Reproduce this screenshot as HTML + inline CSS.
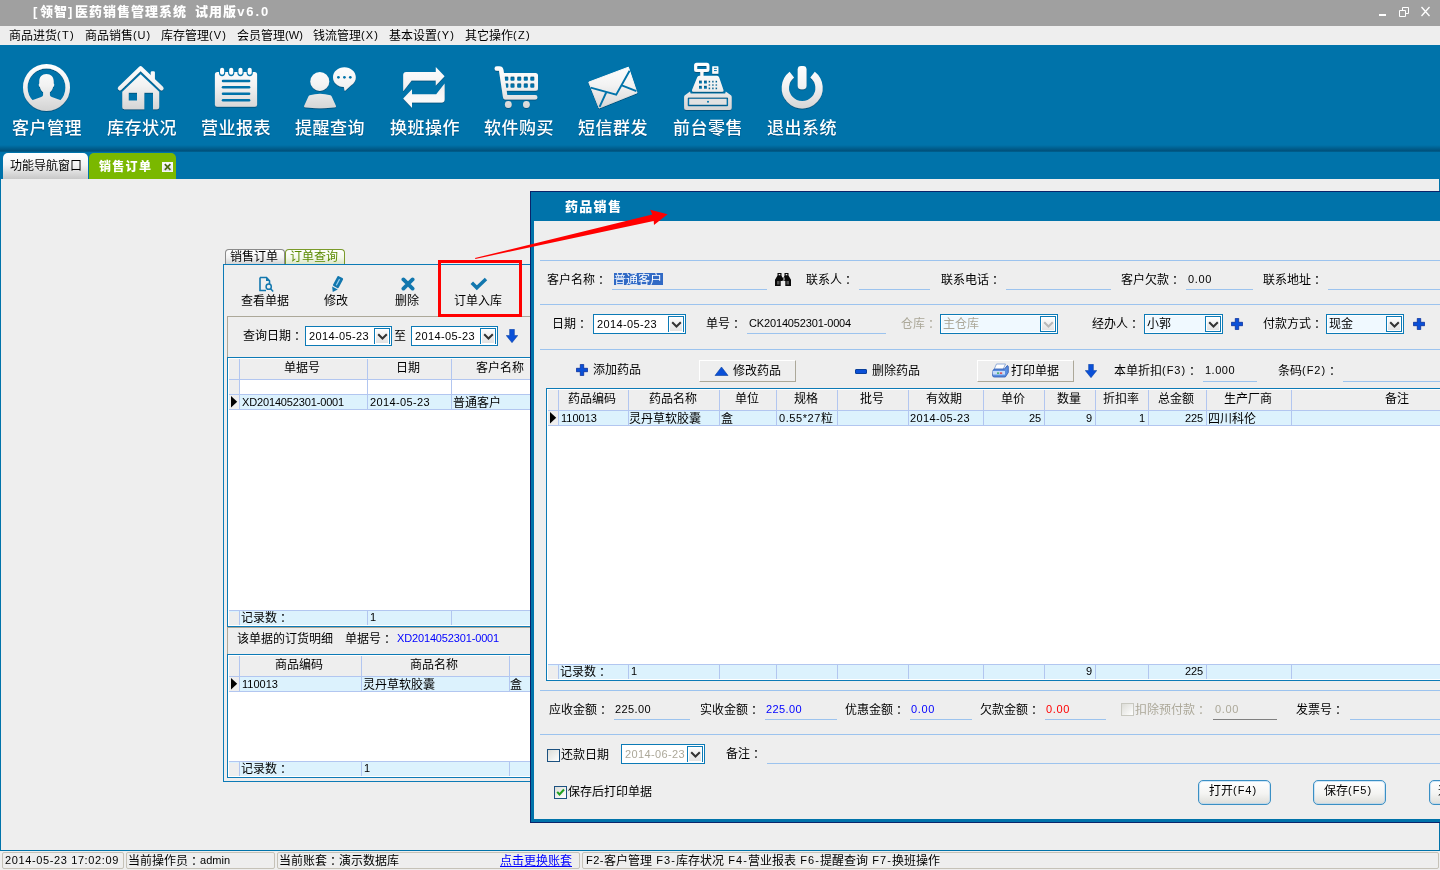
<!DOCTYPE html>
<html lang="zh-CN"><head><meta charset="utf-8"><title>医药销售管理系统</title>
<style>
html,body{margin:0;padding:0;}
body{width:1440px;height:870px;overflow:hidden;background:#eeeeee;position:relative;font:12px/12px "Liberation Sans","Noto Sans CJK SC",sans-serif;color:#000;}
div,span.t,span.b,span.tb,svg{position:absolute;}
div{box-sizing:border-box;}
.t{white-space:pre;font:12px/12px "Liberation Sans","Noto Sans CJK SC",sans-serif;}
.n{font-size:11px;position:relative;top:-1px;}
.b{white-space:pre;font:900 13px/13px "Liberation Sans","Noto Sans CJK SC",sans-serif;letter-spacing:1px;color:#fff;}
.tb{white-space:pre;font:500 17px/17px "Liberation Sans","Noto Sans CJK SC",sans-serif;letter-spacing:0.5px;color:#fff;text-shadow:0 1px 1px rgba(0,50,90,.5);}
.hl{position:absolute;height:1px;background:#9cc3ee;}
.cb{border:1px solid #1b7db5;background:#f4faff;}
.cbd{border:1px solid #1b7db5;background:#f4faff;}
.c{position:relative;left:3px;}

</style></head>
<body>
<div id="app" style="left:0;top:0;width:1440px;height:870px;will-change:transform;overflow:hidden">
<div style="left:0px;top:0px;width:1440px;height:26px;background:#a0a0a0;"></div>
<span class="b" style="left:33px;top:5px"><span style="letter-spacing:2.7px">[</span>领智<span style="letter-spacing:2.7px">]</span>医药销售管理系统<span style="letter-spacing:4.4px"> </span>试用版<span style="letter-spacing:1.9px">v6.0</span></span>
<svg style="left:1375px;top:3px" width="60" height="18" viewBox="0 0 60 18"><rect x="4" y="11" width="7" height="2" fill="#fff"/><path d="M24.5 7.5h6v6h-6z M27.5 7.5v-3h6v6h-3" fill="none" stroke="#fff" stroke-width="1"/><path d="M46.5 4l8 9M54.5 4l-8 9" stroke="#fff" stroke-width="1.3" fill="none"/></svg>
<div style="left:0px;top:26px;width:1440px;height:19px;background:#eeeeee;"></div>
<span class="t" style="left:9px;top:30px;">商品进货<span class="n" style="letter-spacing:1.32px">(T)</span></span>
<span class="t" style="left:85px;top:30px;">商品销售<span class="n" style="letter-spacing:0.91px">(U)</span></span>
<span class="t" style="left:161px;top:30px;">库存管理<span class="n" style="letter-spacing:1.11px">(V)</span></span>
<span class="t" style="left:237px;top:30px;">会员管理<span class="n" style="letter-spacing:0.10px">(W)</span></span>
<span class="t" style="left:313px;top:30px;">钱流管理<span class="n" style="letter-spacing:1.11px">(X)</span></span>
<span class="t" style="left:389px;top:30px;">基本设置<span class="n" style="letter-spacing:1.11px">(Y)</span></span>
<span class="t" style="left:465px;top:30px;">其它操作<span class="n" style="letter-spacing:1.32px">(Z)</span></span>
<div style="left:0px;top:45px;width:1440px;height:134px;background:#0073aa;"></div>
<div style="left:0px;top:145px;width:1440px;height:7px;background:linear-gradient(#0073aa,#00527d 80%,#00608f)"></div>
<span class="tb" style="left:12px;top:120px;">客户管理</span>
<span class="tb" style="left:107px;top:120px;">库存状况</span>
<span class="tb" style="left:201px;top:120px;">营业报表</span>
<span class="tb" style="left:295px;top:120px;">提醒查询</span>
<span class="tb" style="left:390px;top:120px;">换班操作</span>
<span class="tb" style="left:484px;top:120px;">软件购买</span>
<span class="tb" style="left:578px;top:120px;">短信群发</span>
<span class="tb" style="left:673px;top:120px;">前台零售</span>
<span class="tb" style="left:767px;top:120px;">退出系统</span>
<svg style="left:0;top:45px" width="860" height="105" viewBox="0 45 860 105"><defs><linearGradient id="ig" gradientUnits="userSpaceOnUse" x1="0" y1="64" x2="0" y2="110"><stop offset="0" stop-color="#ffffff"/><stop offset="0.45" stop-color="#f3f3f3"/><stop offset="1" stop-color="#d4d4d4"/></linearGradient><filter id="sh" x="-10%" y="-10%" width="120%" height="130%"><feDropShadow dx="0" dy="1" stdDeviation="0.7" flood-color="#003a5c" flood-opacity="0.55"/></filter><clipPath id="uc"><circle cx="46.5" cy="87.4" r="20.2"/></clipPath></defs><g fill="url(#ig)" filter="url(#sh)"><circle cx="46.5" cy="87.4" r="21.2" fill="none" stroke="url(#ig)" stroke-width="4.6"/><g clip-path="url(#uc)"><path d="M46.4 74.1c4.6 0 7.3 3 7.3 7.200v2.200c0.700 0.300 0.800 1.700 0 2.900l-0.600 0.600c-0.500 2.300-1.600 3.900-3.200 5.200v2.600c0 1.300 0.800 1.900 2.600 2.500l7.700 2.600c3 1 5.800 2.600 7.800 5v8h-43v-8c2-2.400 4.800-4 7.800-5l7.700-2.600c1.800-0.600 2.600-1.200 2.600-2.500v-2.600c-1.600-1.300-2.700-2.900-3.200-5.200l-0.600-0.600c-0.800-1.200-0.700-2.600 0-2.900v-2.200c0-4.200 2.700-7.200 7.100-7.200z"/></g><path d="M119.9 88.2L140.6 68.300L161.500 88.200" fill="none" stroke="url(#ig)" stroke-width="4.200" stroke-linecap="round" stroke-linejoin="round"/><path d="M150.700 79.500v-7q0-1.300 1.300-1.300h1.600q1.300 0 1.300 1.300v11z"/><path fill-rule="evenodd" d="M122.300 91.700L140.600 74.200L159.200 91.700V107.300q0 2-2 2H124.300q-2 0-2-2z M128.700 92.800v7.700h8.300v-7.700z M144.300 92.800V109.300h8.700V92.800z"/><rect x="214.900" y="72.100" width="42.200" height="34.700" rx="2.500"/><rect x="219.0" y="67" width="6.200" height="9.200" rx="3.100" fill="#0073aa" filter="none"/><rect x="228.1" y="67" width="6.200" height="9.200" rx="3.100" fill="#0073aa" filter="none"/><rect x="237.4" y="67" width="6.200" height="9.200" rx="3.100" fill="#0073aa" filter="none"/><rect x="246.6" y="67" width="6.200" height="9.200" rx="3.100" fill="#0073aa" filter="none"/><rect x="220.05" y="67.800" width="4.100" height="7" rx="2.050" fill="#ffffff"/><rect x="229.15" y="67.800" width="4.100" height="7" rx="2.050" fill="#ffffff"/><rect x="238.45" y="67.800" width="4.100" height="7" rx="2.050" fill="#ffffff"/><rect x="247.65" y="67.800" width="4.100" height="7" rx="2.050" fill="#ffffff"/><path d="M223 80.9H249.100" stroke="#0073aa" stroke-width="2.500" stroke-linecap="round" fill="none" filter="none"/><path d="M223 87.3H249.100" stroke="#0073aa" stroke-width="2.500" stroke-linecap="round" fill="none" filter="none"/><path d="M223 93.8H249.100" stroke="#0073aa" stroke-width="2.500" stroke-linecap="round" fill="none" filter="none"/><path d="M223 100.2H249.100" stroke="#0073aa" stroke-width="2.500" stroke-linecap="round" fill="none" filter="none"/><circle cx="319.800" cy="81.400" r="9.500"/><path d="M309.700 95.200Q320 92.200 330.400 95.200Q331.300 95.500 331.700 96.400L336 106Q336.400 107 335.300 107.200Q320 109.400 304.800 107.200Q303.700 107 304.100 106L308.400 96.400Q308.800 95.500 309.700 95.200z"/><path d="M344.400 67.300c6.300 0 11.400 4.400 11.400 9.900c0 3.300-1.800 6.200-4.700 8l-5.700 5.200q-0.800 0.600-1-0.400l-0.500-3c-6.100-0.200-10.900-4.500-10.900-9.800c0-5.500 5.100-9.900 11.400-9.900z"/><circle cx="338.4" cy="77.300" r="1.350" fill="#0073aa" filter="none"/><circle cx="344.4" cy="77.300" r="1.350" fill="#0073aa" filter="none"/><circle cx="350.3" cy="77.300" r="1.350" fill="#0073aa" filter="none"/><path d="M406.200 72.100H435.800V66.900L444.600 76.200L435.800 85.500V80.400H411.600L403.200 91.200V75.100q0-3 3-3z"/><path d="M406.200 72.100H435.800V66.900L444.600 76.200L435.800 85.500V80.400H411.600L403.200 91.200V75.100q0-3 3-3z" transform="rotate(180 423.900 87.350)"/><path d="M496.800 68.500H499.300Q500.900 68.500 501.200 70.100L505.300 97.200H535.200" fill="none" stroke="url(#ig)" stroke-width="4.600" stroke-linecap="round" stroke-linejoin="round"/><path fill-rule="evenodd" d="M502.300 73.100H535.500Q538 73.100 538 75.600V88.200Q538 90.700 535.500 90.700H505.300z M504.2 77.4q0-1 1-1h2.200q1 0 1 1v2.400q0 1-1 1h-2.200q-1 0-1-1z M504.2 84.3q0-1 1-1h2.200q1 0 1 1v2.400q0 1-1 1h-2.200q-1 0-1-1z M510.4 77.4q0-1 1-1h2.200q1 0 1 1v2.400q0 1-1 1h-2.200q-1 0-1-1z M510.4 84.3q0-1 1-1h2.200q1 0 1 1v2.400q0 1-1 1h-2.200q-1 0-1-1z M517.1 77.4q0-1 1-1h2.200q1 0 1 1v2.400q0 1-1 1h-2.200q-1 0-1-1z M517.1 84.3q0-1 1-1h2.200q1 0 1 1v2.400q0 1-1 1h-2.200q-1 0-1-1z M523.7 77.4q0-1 1-1h2.200q1 0 1 1v2.400q0 1-1 1h-2.200q-1 0-1-1z M523.7 84.3q0-1 1-1h2.200q1 0 1 1v2.400q0 1-1 1h-2.200q-1 0-1-1z M530.2 77.4q0-1 1-1h2.200q1 0 1 1v2.400q0 1-1 1h-2.200q-1 0-1-1z M530.2 84.3q0-1 1-1h2.200q1 0 1 1v2.400q0 1-1 1h-2.200q-1 0-1-1z "/><circle cx="508.300" cy="104.500" r="3.400"/><circle cx="526.400" cy="104.500" r="3.400"/><path d="M588.800 82.100L628.400 67.200L637 92.800L599.100 108z" stroke="url(#ig)" stroke-width="1" stroke-linejoin="round"/><path d="M590.600 87.600L616.200 94.600L629.600 70.800 M599.600 106.800L606.400 92 M621.800 85.300L636.400 91.200" fill="none" stroke="#0073aa" stroke-width="1.900" filter="none"/><path fill-rule="evenodd" d="M696.600 62.800H706.900Q709.400 62.800 709.400 65.300V69.600Q709.400 72.100 706.900 72.100H696.600Q694.100 72.100 694.100 69.600V65.300Q694.100 62.800 696.600 62.800z M697.200 65.900v3.100h9.400v-3.100z"/><rect x="700.300" y="71.500" width="3.200" height="5"/><rect x="712.200" y="66.200" width="6.200" height="7.600" rx="0.500"/><path d="M714 68.300h2.800M714 70.600h2.800" stroke="#0073aa" stroke-width="1" fill="none" filter="none"/><path fill-rule="evenodd" d="M699.200 75.700H717.100Q718.600 75.700 719.100 77.200L723.500 90Q724 91.700 722.300 91.700H693.200Q691.500 91.700 692 90L697.200 77.200Q697.700 75.700 699.200 75.700z M699.0 80.6h2.900v2.900h-2.900z M699.0 85.8h2.900v2.900h-2.900z M704.0 80.6h2.900v2.900h-2.900z M704.0 85.8h2.900v2.900h-2.900z M708.6 80.8h1.600v1.600h-1.600z M708.6 84.2h1.600v1.600h-1.600z M708.6 87.6h1.600v1.600h-1.600z M712.1 80.8h1.600v1.600h-1.600z M712.1 84.2h1.600v1.600h-1.600z M712.1 87.6h1.600v1.600h-1.600z M715.5 80.8h1.600v1.600h-1.600z M715.5 84.2h1.600v1.600h-1.600z M715.5 87.6h1.600v1.600h-1.600z "/><path fill-rule="evenodd" d="M690 91.400L684.600 95.600Q684.100 96.200 684.100 97.200V107.400Q684.100 109.900 686.600 109.900H729.200Q731.700 109.900 731.700 107.400V97.200Q731.700 96.200 731.200 95.600L725.800 91.400L725.200 93.600H690.600z M688.700 97.400Q687.700 97.400 687.700 98.400V105.200Q687.700 106.200 688.700 106.200H727.100Q728.100 106.200 728.100 105.200V98.400Q728.100 97.400 727.100 97.400z"/><rect x="689.200" y="98.900" width="37.400" height="5.800" fill="#e2e2e2" filter="none"/><circle cx="708" cy="101.800" r="1" fill="#0073aa" filter="none"/><path d="M812.57 74.62A16.85 16.85 0 1 1 791.83 74.62" fill="none" stroke="url(#ig)" stroke-width="7.300"/><rect x="797.700" y="65.900" width="8.800" height="23.300" rx="3.400"/></g></svg>
<div style="left:3px;top:153px;width:85px;height:26px;border-radius:5px 5px 0 0;background:linear-gradient(#ffffff,#f4f4f4 45%,#c8c8c8)"></div>
<span class="t" style="left:10px;top:160px;">功能导航窗口</span>
<div style="left:89px;top:153px;width:87px;height:26px;background:#7ab800;border-radius:5px 5px 0 0;"></div>
<span class="b" style="left:99px;top:161px;font-size:12px;line-height:12px;letter-spacing:1.3px;">销售订单</span>
<svg style="left:162px;top:162px" width="11" height="10" viewBox="0 0 11 10"><defs><linearGradient id="cg" x1="0" y1="0" x2="0" y2="1"><stop offset="0" stop-color="#ffffff"/><stop offset="1" stop-color="#dcdce6"/></linearGradient></defs><rect x="0" y="0" width="11" height="10" fill="url(#cg)"/><rect x="0.500" y="0.500" width="10" height="9" fill="none" stroke="#f6f6f6"/><path d="M2.800 2.200l5.600 5.600M8.400 2.200l-5.600 5.600" stroke="#4c6a12" stroke-width="1.700" fill="none"/></svg>
<div style="left:0px;top:179px;width:1440px;height:672px;background:#eeeeee;border-left:1px solid #0073aa;border-right:1px solid #0073aa;border-bottom:1px solid #0073aa;"></div>
<div style="left:225px;top:249px;width:60px;height:16px;border:1px solid #8a8a8a;border-bottom:none;border-radius:4px 4px 0 0;background:linear-gradient(#ffffff,#f2f2f2 50%,#d0d0d0)"></div>
<span class="t" style="left:230px;top:251px;">销售订单</span>
<div style="left:285px;top:249px;width:60px;height:16px;border:1px solid #7a9a2a;border-bottom:none;border-radius:4px 4px 0 0;background:linear-gradient(#ffffff,#f4f8ec 50%,#d8e4c0)"></div>
<span class="t" style="left:290px;top:251px;color:#5a8a00;">订单查询</span>
<div style="left:223px;top:264px;width:320px;height:518px;border:1px solid #0c7ab6;"></div>
<span class="t" style="left:241px;top:295px;">查看单据</span>
<span class="t" style="left:324px;top:295px;">修改</span>
<span class="t" style="left:395px;top:295px;">删除</span>
<span class="t" style="left:454px;top:295px;">订单入库</span>
<svg style="left:258px;top:276px" width="17" height="17" viewBox="0 0 17 17"><path d="M2 1.5h6.5l3 3.2V8M2 1.5v13h6" fill="none" stroke="#1277ae" stroke-width="1.6"/><path d="M8 1.5v3.5h3.5" fill="#1277ae"/><circle cx="10.7" cy="10.7" r="2.6" fill="none" stroke="#1277ae" stroke-width="1.5"/><path d="M12.6 12.8l2.6 2.7" stroke="#1277ae" stroke-width="1.6"/></svg>
<svg style="left:330px;top:276px" width="14" height="17" viewBox="0 0 14 17"><g transform="rotate(28 7 8)"><rect x="3.800" y="0.200" width="6.400" height="11.200" rx="1.200" fill="#1277ae"/><path d="M3.800 12.400h6.400L7 17z" fill="#1277ae"/><rect x="6.400" y="2.500" width="1.200" height="7" fill="#9ad0ee"/></g></svg>
<svg style="left:401px;top:277px" width="14" height="14" viewBox="0 0 14 14"><path d="M2.400 2.400l9.200 9.200M11.600 2.400l-9.200 9.200" stroke="#1277ae" stroke-width="3.800" stroke-linecap="round" fill="none"/></svg>
<svg style="left:470px;top:277px" width="18" height="14" viewBox="0 0 18 14"><path d="M1.800 5.800l5 5L16 2" stroke="#1277ae" stroke-width="3.500" fill="none"/></svg>
<div style="left:227px;top:316px;width:316px;height:41px;border-top:1px solid #aca899;border-left:1px solid #aca899;"></div>
<span class="t" style="left:243px;top:330px;">查询日期<span class="c">：</span></span>
<div style="left:305px;top:326px;width:87px;height:20px;background:#ffffff;border:1px solid #0c7ab6;"></div>
<span class="t" style="left:309px;top:331px;color:#000;"><span class="n" style="letter-spacing:0.37px">2014-05-23</span></span>
<div style="left:374px;top:328px;width:16px;height:16px;border:1px solid #0c7ab6;border-bottom:none;background:#fff;"></div>
<div style="left:376px;top:330px;width:12px;height:13px;background:linear-gradient(#fbfbfb,#e2e2e2);"></div>
<svg style="left:377px;top:333px" width="11" height="8" viewBox="0 0 11 8"><path d="M1.2 1.2l4.300 4.300L9.800 1.200" stroke="#333" stroke-width="2" fill="none"/></svg>
<span class="t" style="left:394px;top:330px;">至</span>
<div style="left:411px;top:326px;width:87px;height:20px;background:#ffffff;border:1px solid #0c7ab6;"></div>
<span class="t" style="left:415px;top:331px;color:#000;"><span class="n" style="letter-spacing:0.37px">2014-05-23</span></span>
<div style="left:480px;top:328px;width:16px;height:16px;border:1px solid #0c7ab6;border-bottom:none;background:#fff;"></div>
<div style="left:482px;top:330px;width:12px;height:13px;background:linear-gradient(#fbfbfb,#e2e2e2);"></div>
<svg style="left:483px;top:333px" width="11" height="8" viewBox="0 0 11 8"><path d="M1.2 1.2l4.300 4.300L9.800 1.200" stroke="#333" stroke-width="2" fill="none"/></svg>
<svg style="left:506px;top:329px" width="12" height="14" viewBox="0 0 12 14"><path d="M3.6 0.3h4.8v6.2h3.4L6 13.7 0.2 6.5h3.4z" fill="#0a50d8" stroke="#0a3f9a" stroke-width="0.5"/></svg>
<div style="left:227px;top:357px;width:316px;height:270px;background:#ffffff;border:1px solid #0c7ab6;"></div>
<div style="left:229px;top:359px;width:313px;height:20px;background:#eeeeee;"></div>
<div style="left:229px;top:379px;width:313px;height:1px;background:#b2c6f0;"></div>
<div style="left:229px;top:380px;width:10px;height:14px;background:#eeeeee;"></div>
<div style="left:229px;top:394px;width:313px;height:1px;background:#b2c6f0;"></div>
<div style="left:229px;top:395px;width:313px;height:14px;background:#dcf2fd;"></div>
<div style="left:229px;top:395px;width:10px;height:14px;background:#eeeeee;"></div>
<div style="left:229px;top:409px;width:313px;height:1px;background:#b2c6f0;"></div>
<svg style="left:231px;top:396px" width="7" height="12" viewBox="0 0 7 12"><path d="M0 0l6.200 5.700L0 11.400z" fill="#000"/></svg>
<span class="t" style="left:242px;top:397px;"><span class="n" style="letter-spacing:-0.15px">XD2014052301-0001</span></span>
<span class="t" style="left:370px;top:397px;"><span class="n" style="letter-spacing:0.37px">2014-05-23</span></span>
<span class="t" style="left:453px;top:397px;">普通客户</span>
<div style="left:229px;top:610px;width:313px;height:1px;background:#b2c6f0;"></div>
<div style="left:229px;top:611px;width:313px;height:14px;background:#dcf2fd;"></div>
<div style="left:229px;top:612px;width:10px;height:13px;background:#eeeeee;"></div>
<span class="t" style="left:241px;top:612px;">记录数<span class="c">：</span></span>
<span class="t" style="left:370px;top:612px;"><span class="n" style="letter-spacing:-0.12px">1</span></span>
<div style="left:239px;top:359px;width:1px;height:51px;background:#b2c6f0;"></div>
<div style="left:239px;top:611px;width:1px;height:14px;background:#b2c6f0;"></div>
<div style="left:367px;top:359px;width:1px;height:51px;background:#b2c6f0;"></div>
<div style="left:367px;top:611px;width:1px;height:14px;background:#b2c6f0;"></div>
<div style="left:451px;top:359px;width:1px;height:51px;background:#b2c6f0;"></div>
<div style="left:451px;top:611px;width:1px;height:14px;background:#b2c6f0;"></div>
<span class="t" style="left:284px;top:362px;">单据号</span>
<span class="t" style="left:396px;top:362px;">日期</span>
<span class="t" style="left:476px;top:362px;">客户名称</span>
<div style="left:227px;top:627px;width:316px;height:27px;border-top:1px solid #aca899;border-left:1px solid #aca899;"></div>
<span class="t" style="left:237px;top:633px;">该单据的订货明细</span>
<span class="t" style="left:345px;top:633px;">单据号<span class="c">：</span></span>
<span class="t" style="left:397px;top:633px;color:#0000ff;"><span class="n" style="letter-spacing:-0.15px">XD2014052301-0001</span></span>
<div style="left:227px;top:654px;width:316px;height:124px;background:#ffffff;border:1px solid #0c7ab6;"></div>
<div style="left:229px;top:656px;width:313px;height:20px;background:#eeeeee;"></div>
<div style="left:229px;top:676px;width:313px;height:1px;background:#b2c6f0;"></div>
<div style="left:229px;top:677px;width:313px;height:14px;background:#dcf2fd;"></div>
<div style="left:229px;top:677px;width:10px;height:14px;background:#eeeeee;"></div>
<div style="left:229px;top:691px;width:313px;height:1px;background:#b2c6f0;"></div>
<svg style="left:231px;top:678px" width="7" height="12" viewBox="0 0 7 12"><path d="M0 0l6.200 5.700L0 11.400z" fill="#000"/></svg>
<span class="t" style="left:242px;top:679px;"><span class="n" style="letter-spacing:0.02px">110013</span></span>
<span class="t" style="left:363px;top:679px;">灵丹草软胶囊</span>
<span class="t" style="left:510px;top:679px;">盒</span>
<div style="left:229px;top:761px;width:313px;height:1px;background:#b2c6f0;"></div>
<div style="left:229px;top:762px;width:313px;height:14px;background:#dcf2fd;"></div>
<div style="left:229px;top:763px;width:10px;height:13px;background:#eeeeee;"></div>
<span class="t" style="left:241px;top:763px;">记录数<span class="c">：</span></span>
<span class="t" style="left:364px;top:763px;"><span class="n" style="letter-spacing:-0.12px">1</span></span>
<div style="left:239px;top:656px;width:1px;height:36px;background:#b2c6f0;"></div>
<div style="left:239px;top:762px;width:1px;height:14px;background:#b2c6f0;"></div>
<div style="left:361px;top:656px;width:1px;height:36px;background:#b2c6f0;"></div>
<div style="left:361px;top:762px;width:1px;height:14px;background:#b2c6f0;"></div>
<div style="left:509px;top:656px;width:1px;height:36px;background:#b2c6f0;"></div>
<div style="left:509px;top:762px;width:1px;height:14px;background:#b2c6f0;"></div>
<span class="t" style="left:275px;top:659px;">商品编码</span>
<span class="t" style="left:410px;top:659px;">商品名称</span>
<div style="left:530px;top:191px;width:920px;height:632px;background:#eeeeee;border:1px solid #0a246a;"></div>
<div style="left:531px;top:192px;width:920px;height:630px;border:3px solid #0073aa;border-top-width:29px;"></div>
<span class="b" style="left:565px;top:200px;letter-spacing:1.3px;">药品销售</span>
<div style="left:540px;top:260px;width:900px;height:1px;background:#9cc3ee;"></div>
<div style="left:540px;top:304px;width:900px;height:1px;background:#9cc3ee;"></div>
<div style="left:540px;top:349px;width:900px;height:1px;background:#9cc3ee;"></div>
<div style="left:540px;top:690px;width:900px;height:1px;background:#9cc3ee;"></div>
<div style="left:540px;top:734px;width:900px;height:1px;background:#9cc3ee;"></div>
<span class="t" style="left:547px;top:274px;">客户名称<span class="c">：</span></span>
<div style="left:614px;top:273px;width:49px;height:12px;background:#316ac5;"></div>
<span class="t" style="left:614px;top:274px;color:#fff;">普通客户</span>
<div style="left:612px;top:289px;width:155px;height:1px;background:#9cc3ee;"></div>
<svg style="left:775px;top:273px" width="16" height="13" viewBox="0 0 16 13"><path d="M2.500 0h4v2.600l1 2.400v3h-1.800v5h-5.700v-6.200l2.500-4.200z M13.500 0h-4v2.600l-1 2.400v3h1.800v5h5.700v-6.200l-2.500-4.200z M6.500 4.500h3v3h-3z" fill="#0a0a0a"/><path d="M3.700 1h1.600v1.200h-1.600z M10.700 1h1.600v1.200h-1.600z" fill="#eee"/><path d="M2 8h2.500v3.500h-2.500z M11.500 8h2.500v3.500h-2.500z" fill="#555"/></svg>
<span class="t" style="left:806px;top:274px;">联系人<span class="c">：</span></span>
<div style="left:859px;top:289px;width:71px;height:1px;background:#9cc3ee;"></div>
<span class="t" style="left:941px;top:274px;">联系电话<span class="c">：</span></span>
<div style="left:1006px;top:289px;width:105px;height:1px;background:#9cc3ee;"></div>
<span class="t" style="left:1121px;top:274px;">客户欠款<span class="c">：</span></span>
<span class="t" style="left:1188px;top:274px;"><span class="n" style="letter-spacing:0.65px">0.00</span></span>
<div style="left:1186px;top:289px;width:67px;height:1px;background:#9cc3ee;"></div>
<span class="t" style="left:1263px;top:274px;">联系地址<span class="c">：</span></span>
<div style="left:1328px;top:289px;width:112px;height:1px;background:#9cc3ee;"></div>
<span class="t" style="left:552px;top:318px;">日期<span class="c">：</span></span>
<div style="left:593px;top:314px;width:93px;height:20px;background:#ffffff;border:1px solid #0c7ab6;"></div>
<span class="t" style="left:597px;top:319px;color:#000;"><span class="n" style="letter-spacing:0.37px">2014-05-23</span></span>
<div style="left:668px;top:316px;width:16px;height:16px;border:1px solid #0c7ab6;border-bottom:none;background:#fff;"></div>
<div style="left:670px;top:318px;width:12px;height:13px;background:linear-gradient(#fbfbfb,#e2e2e2);"></div>
<svg style="left:671px;top:321px" width="11" height="8" viewBox="0 0 11 8"><path d="M1.2 1.2l4.300 4.300L9.800 1.200" stroke="#333" stroke-width="2" fill="none"/></svg>
<span class="t" style="left:706px;top:318px;">单号<span class="c">：</span></span>
<span class="t" style="left:749px;top:318px;"><span class="n" style="letter-spacing:-0.15px">CK2014052301-0004</span></span>
<div style="left:747px;top:333px;width:139px;height:1px;background:#9cc3ee;"></div>
<span class="t" style="left:901px;top:318px;color:#aca899;">仓库<span class="c">：</span></span>
<div style="left:940px;top:314px;width:118px;height:20px;background:#ffffff;border:1px solid #0c7ab6;"></div>
<div style="left:942px;top:316px;width:98px;height:16px;background:#f0f9ff;"></div>
<span class="t" style="left:943px;top:318px;color:#aca899;">主仓库</span>
<div style="left:1040px;top:316px;width:16px;height:16px;border:1px solid #0c7ab6;background:linear-gradient(#ffffff,#e0e0e0);box-shadow:inset 0 0 0 1px #fff;"></div>
<svg style="left:1043px;top:321px" width="11" height="8" viewBox="0 0 11 8"><path d="M1.2 1.2l4.300 4.300L9.800 1.200" stroke="#b8b8b8" stroke-width="2" fill="none"/></svg>
<span class="t" style="left:1092px;top:318px;">经办人<span class="c">：</span></span>
<div style="left:1144px;top:314px;width:79px;height:20px;background:#ffffff;border:1px solid #0c7ab6;"></div>
<div style="left:1146px;top:316px;width:59px;height:16px;background:#f0f9ff;"></div>
<span class="t" style="left:1147px;top:318px;color:#000;">小郭</span>
<div style="left:1205px;top:316px;width:16px;height:16px;border:1px solid #0c7ab6;background:linear-gradient(#ffffff,#e0e0e0);box-shadow:inset 0 0 0 1px #fff;"></div>
<svg style="left:1208px;top:321px" width="11" height="8" viewBox="0 0 11 8"><path d="M1.2 1.2l4.300 4.300L9.800 1.200" stroke="#333" stroke-width="2" fill="none"/></svg>
<svg style="left:1231px;top:318px" width="12" height="12" viewBox="0 0 12 12"><path d="M4.300 0.400h3.400v3.900h3.900v3.400h-3.900v3.900h-3.400v-3.900h-3.900v-3.400h3.900z" fill="#0a50d8" stroke="#0a2f9a" stroke-width="0.800"/></svg>
<span class="t" style="left:1263px;top:318px;">付款方式<span class="c">：</span></span>
<div style="left:1326px;top:314px;width:78px;height:20px;background:#ffffff;border:1px solid #0c7ab6;"></div>
<div style="left:1328px;top:316px;width:58px;height:16px;background:#f0f9ff;"></div>
<span class="t" style="left:1329px;top:318px;color:#000;">现金</span>
<div style="left:1386px;top:316px;width:16px;height:16px;border:1px solid #0c7ab6;background:linear-gradient(#ffffff,#e0e0e0);box-shadow:inset 0 0 0 1px #fff;"></div>
<svg style="left:1389px;top:321px" width="11" height="8" viewBox="0 0 11 8"><path d="M1.2 1.2l4.300 4.300L9.800 1.200" stroke="#333" stroke-width="2" fill="none"/></svg>
<svg style="left:1413px;top:318px" width="12" height="12" viewBox="0 0 12 12"><path d="M4.300 0.400h3.400v3.900h3.900v3.400h-3.900v3.900h-3.400v-3.900h-3.900v-3.400h3.900z" fill="#0a50d8" stroke="#0a2f9a" stroke-width="0.800"/></svg>
<svg style="left:576px;top:364px" width="12" height="12" viewBox="0 0 12 12"><path d="M4.300 0.400h3.400v3.900h3.900v3.400h-3.900v3.900h-3.400v-3.900h-3.900v-3.400h3.900z" fill="#0a50d8" stroke="#0a2f9a" stroke-width="0.800"/></svg>
<span class="t" style="left:593px;top:364px;">添加药品</span>
<div style="left:699px;top:360px;width:97px;height:22px;background:#eeeeee;border:1px solid;border-color:#ffffff #aca899 #aca899 #ffffff;"></div>
<svg style="left:714px;top:366px" width="15" height="11" viewBox="0 0 15 11"><path d="M7.500 1L14 9.500H1z" fill="#0a50d8" stroke="#0a3f9a" stroke-width="0.6"/></svg>
<span class="t" style="left:733px;top:365px;">修改药品</span>
<div style="left:855px;top:369px;width:12px;height:5px;background:#0a50d8;border:1px solid #0a3f9a;border-radius:1px;"></div>
<span class="t" style="left:872px;top:365px;">删除药品</span>
<div style="left:977px;top:360px;width:97px;height:22px;background:#eeeeee;border:1px solid;border-color:#ffffff #aca899 #aca899 #ffffff;"></div>
<svg style="left:991px;top:363px" width="18" height="16" viewBox="0 0 18 16"><path d="M5.500 1h9l-2.500 5.500h-9z" fill="#ffffff" stroke="#7a9ad0" stroke-width="0.800"/><path d="M2 7.500q0.500-1.500 2-1.500h9.500l2.800-3.500q1 0.300 1 1.500v5.500l-3 4.500h-11q-1.800 0-1.800-1.800z" fill="#5a8ee0" stroke="#2a55b0" stroke-width="0.800"/><path d="M1.800 8h12.200v3.600h-12.200z" fill="#c8dcf8"/><rect x="6" y="9.500" width="2.200" height="1.200" fill="#20a040"/><rect x="9" y="9.500" width="2.200" height="1.200" fill="#e02020"/></svg>
<span class="t" style="left:1011px;top:365px;">打印单据</span>
<svg style="left:1085px;top:364px" width="12" height="14" viewBox="0 0 12 14"><path d="M3.6 0.3h4.8v6.2h3.4L6 13.7 0.2 6.5h3.4z" fill="#0a50d8" stroke="#0a3f9a" stroke-width="0.5"/></svg>
<span class="t" style="left:1114px;top:365px;">本单折扣<span class="n" style="letter-spacing:0.96px">(F3)</span><span class="c">：</span></span>
<span class="t" style="left:1205px;top:365px;"><span class="n" style="letter-spacing:0.50px">1.000</span></span>
<div style="left:1203px;top:381px;width:54px;height:1px;background:#9cc3ee;"></div>
<span class="t" style="left:1278px;top:365px;">条码<span class="n" style="letter-spacing:0.96px">(F2)</span><span class="c">：</span></span>
<div style="left:1343px;top:381px;width:97px;height:1px;background:#9cc3ee;"></div>
<div style="left:546px;top:388px;width:910px;height:293px;background:#ffffff;border:1px solid #0c7ab6;"></div>
<div style="left:548px;top:390px;width:907px;height:20px;background:#eeeeee;"></div>
<div style="left:548px;top:410px;width:907px;height:1px;background:#b2c6f0;"></div>
<div style="left:548px;top:411px;width:907px;height:14px;background:#dcf2fd;"></div>
<div style="left:548px;top:411px;width:10px;height:14px;background:#eeeeee;"></div>
<div style="left:548px;top:425px;width:907px;height:1px;background:#b2c6f0;"></div>
<svg style="left:550px;top:412px" width="7" height="12" viewBox="0 0 7 12"><path d="M0 0l6.200 5.700L0 11.400z" fill="#000"/></svg>
<span class="t" style="left:561px;top:413px;"><span class="n" style="letter-spacing:0.02px">110013</span></span>
<span class="t" style="left:629px;top:413px;">灵丹草软胶囊</span>
<span class="t" style="left:721px;top:413px;">盒</span>
<span class="t" style="left:779px;top:413px;"><span class="n" style="letter-spacing:0.58px">0.55*27</span>粒</span>
<span class="t" style="left:910px;top:413px;"><span class="n" style="letter-spacing:0.37px">2014-05-23</span></span>
<span class="t" style="left:941px;width:100px;text-align:right;top:413px"><span class="n" style="letter-spacing:-0.12px">25</span></span>
<span class="t" style="left:992px;width:100px;text-align:right;top:413px"><span class="n" style="letter-spacing:-0.12px">9</span></span>
<span class="t" style="left:1045px;width:100px;text-align:right;top:413px"><span class="n" style="letter-spacing:-0.12px">1</span></span>
<span class="t" style="left:1103px;width:100px;text-align:right;top:413px"><span class="n" style="letter-spacing:-0.12px">225</span></span>
<span class="t" style="left:1208px;top:413px;">四川科伦</span>
<div style="left:548px;top:664px;width:907px;height:1px;background:#b2c6f0;"></div>
<div style="left:548px;top:665px;width:907px;height:14px;background:#dcf2fd;"></div>
<div style="left:548px;top:666px;width:10px;height:13px;background:#eeeeee;"></div>
<span class="t" style="left:560px;top:666px;">记录数<span class="c">：</span></span>
<span class="t" style="left:631px;top:666px;"><span class="n" style="letter-spacing:-0.12px">1</span></span>
<span class="t" style="left:992px;width:100px;text-align:right;top:666px"><span class="n" style="letter-spacing:-0.12px">9</span></span>
<span class="t" style="left:1103px;width:100px;text-align:right;top:666px"><span class="n" style="letter-spacing:-0.12px">225</span></span>
<div style="left:558px;top:390px;width:1px;height:36px;background:#b2c6f0;"></div>
<div style="left:558px;top:665px;width:1px;height:14px;background:#b2c6f0;"></div>
<div style="left:628px;top:390px;width:1px;height:36px;background:#b2c6f0;"></div>
<div style="left:628px;top:665px;width:1px;height:14px;background:#b2c6f0;"></div>
<div style="left:719px;top:390px;width:1px;height:36px;background:#b2c6f0;"></div>
<div style="left:719px;top:665px;width:1px;height:14px;background:#b2c6f0;"></div>
<div style="left:776px;top:390px;width:1px;height:36px;background:#b2c6f0;"></div>
<div style="left:776px;top:665px;width:1px;height:14px;background:#b2c6f0;"></div>
<div style="left:837px;top:390px;width:1px;height:36px;background:#b2c6f0;"></div>
<div style="left:837px;top:665px;width:1px;height:14px;background:#b2c6f0;"></div>
<div style="left:908px;top:390px;width:1px;height:36px;background:#b2c6f0;"></div>
<div style="left:908px;top:665px;width:1px;height:14px;background:#b2c6f0;"></div>
<div style="left:983px;top:390px;width:1px;height:36px;background:#b2c6f0;"></div>
<div style="left:983px;top:665px;width:1px;height:14px;background:#b2c6f0;"></div>
<div style="left:1044px;top:390px;width:1px;height:36px;background:#b2c6f0;"></div>
<div style="left:1044px;top:665px;width:1px;height:14px;background:#b2c6f0;"></div>
<div style="left:1095px;top:390px;width:1px;height:36px;background:#b2c6f0;"></div>
<div style="left:1095px;top:665px;width:1px;height:14px;background:#b2c6f0;"></div>
<div style="left:1148px;top:390px;width:1px;height:36px;background:#b2c6f0;"></div>
<div style="left:1148px;top:665px;width:1px;height:14px;background:#b2c6f0;"></div>
<div style="left:1206px;top:390px;width:1px;height:36px;background:#b2c6f0;"></div>
<div style="left:1206px;top:665px;width:1px;height:14px;background:#b2c6f0;"></div>
<div style="left:1291px;top:390px;width:1px;height:36px;background:#b2c6f0;"></div>
<div style="left:1291px;top:665px;width:1px;height:14px;background:#b2c6f0;"></div>
<span class="t" style="left:568px;top:393px;">药品编码</span>
<span class="t" style="left:649px;top:393px;">药品名称</span>
<span class="t" style="left:735px;top:393px;">单位</span>
<span class="t" style="left:794px;top:393px;">规格</span>
<span class="t" style="left:860px;top:393px;">批号</span>
<span class="t" style="left:926px;top:393px;">有效期</span>
<span class="t" style="left:1001px;top:393px;">单价</span>
<span class="t" style="left:1057px;top:393px;">数量</span>
<span class="t" style="left:1103px;top:393px;">折扣率</span>
<span class="t" style="left:1158px;top:393px;">总金额</span>
<span class="t" style="left:1224px;top:393px;">生产厂商</span>
<span class="t" style="left:1385px;top:393px;">备注</span>
<span class="t" style="left:549px;top:704px;">应收金额<span class="c">：</span></span>
<span class="t" style="left:615px;top:704px;"><span class="n" style="letter-spacing:0.39px">225.00</span></span>
<div style="left:614px;top:719px;width:76px;height:1px;background:#9cc3ee;"></div>
<span class="t" style="left:700px;top:704px;">实收金额<span class="c">：</span></span>
<span class="t" style="left:766px;top:704px;color:#0000ff;"><span class="n" style="letter-spacing:0.39px">225.00</span></span>
<div style="left:765px;top:719px;width:72px;height:1px;background:#9cc3ee;"></div>
<span class="t" style="left:845px;top:704px;">优惠金额<span class="c">：</span></span>
<span class="t" style="left:911px;top:704px;color:#0000ff;"><span class="n" style="letter-spacing:0.65px">0.00</span></span>
<div style="left:910px;top:719px;width:62px;height:1px;background:#9cc3ee;"></div>
<span class="t" style="left:980px;top:704px;">欠款金额<span class="c">：</span></span>
<span class="t" style="left:1046px;top:704px;color:#ff0000;"><span class="n" style="letter-spacing:0.65px">0.00</span></span>
<div style="left:1045px;top:719px;width:61px;height:1px;background:#9cc3ee;"></div>
<div style="left:1121px;top:703px;width:13px;height:13px;border:1px solid #c8c8c0;background:linear-gradient(135deg,#dcdcd7,#ffffff);"></div>
<span class="t" style="left:1135px;top:704px;color:#aca899;">扣除预付款<span class="c">：</span></span>
<span class="t" style="left:1215px;top:704px;color:#aca899;"><span class="n" style="letter-spacing:0.65px">0.00</span></span>
<div style="left:1213px;top:719px;width:64px;height:1px;background:#808080;"></div>
<span class="t" style="left:1296px;top:704px;">发票号<span class="c">：</span></span>
<div style="left:1350px;top:719px;width:90px;height:1px;background:#9cc3ee;"></div>
<div style="left:547px;top:749px;width:13px;height:13px;border:1px solid #1c5180;background:linear-gradient(135deg,#dcdcd7,#ffffff);"></div>
<span class="t" style="left:561px;top:749px;">还款日期</span>
<div style="left:621px;top:744px;width:84px;height:20px;background:#ffffff;border:1px solid #0c7ab6;"></div>
<span class="t" style="left:625px;top:749px;color:#aca899;"><span class="n" style="letter-spacing:0.37px">2014-06-23</span></span>
<div style="left:687px;top:746px;width:16px;height:16px;border:1px solid #0c7ab6;border-bottom:none;background:#fff;"></div>
<div style="left:689px;top:748px;width:12px;height:13px;background:linear-gradient(#fbfbfb,#e2e2e2);"></div>
<svg style="left:690px;top:751px" width="11" height="8" viewBox="0 0 11 8"><path d="M1.2 1.2l4.300 4.300L9.800 1.200" stroke="#333" stroke-width="2" fill="none"/></svg>
<span class="t" style="left:726px;top:748px;">备注<span class="c">：</span></span>
<div style="left:767px;top:763px;width:673px;height:1px;background:#9cc3ee;"></div>
<div style="left:554px;top:786px;width:13px;height:13px;border:1px solid #1c5180;background:linear-gradient(135deg,#dcdcd7,#ffffff);"></div>
<svg style="left:556px;top:788px" width="9" height="9" viewBox="0 0 9 9"><path d="M1.200 3.800L3.500 6.500L8 1.500" stroke="#21a121" stroke-width="2" fill="none"/></svg>
<span class="t" style="left:568px;top:786px;">保存后打印单据</span>
<div style="left:1198px;top:780px;width:73px;height:25px;border:1px solid #3a8fc4;border-radius:5px;background:linear-gradient(#ffffff,#f4f4f2 55%,#dededa);box-shadow:inset 0 0 0 1px rgba(170,210,240,.55);"></div>
<span class="t" style="left:1209px;top:785px;">打开<span class="n" style="letter-spacing:0.96px">(F4)</span></span>
<div style="left:1313px;top:780px;width:73px;height:25px;border:1px solid #3a8fc4;border-radius:5px;background:linear-gradient(#ffffff,#f4f4f2 55%,#dededa);box-shadow:inset 0 0 0 1px rgba(170,210,240,.55);"></div>
<span class="t" style="left:1324px;top:785px;">保存<span class="n" style="letter-spacing:0.96px">(F5)</span></span>
<div style="left:1429px;top:780px;width:73px;height:25px;border:1px solid #3a8fc4;border-radius:5px;background:linear-gradient(#ffffff,#f4f4f2 55%,#dededa);box-shadow:inset 0 0 0 1px rgba(170,210,240,.55);"></div>
<span class="t" style="left:1438px;top:785px;">退出<span class="n" style="letter-spacing:0.96px">(F6)</span></span>
<div style="left:438px;top:260px;width:84px;height:57px;border:3px solid #ff0000;"></div>
<svg style="left:470px;top:200px" width="210" height="64" viewBox="470 200 210 64"><path d="M475 258 L652.300 214.500 L650.200 209.800 L667.600 214.200 L654 225 L653.700 221.100 L475.400 258.900z" fill="#ff0000"/></svg>
<div style="left:0px;top:851px;width:1440px;height:19px;background:#eeeeee;"></div>
<div style="left:2px;top:852px;width:122px;height:17px;border:1px solid #c5c2b8;border-radius:2px;"></div>
<div style="left:126px;top:852px;width:149px;height:17px;border:1px solid #c5c2b8;border-radius:2px;"></div>
<div style="left:277px;top:852px;width:303px;height:17px;border:1px solid #c5c2b8;border-radius:2px;"></div>
<div style="left:582px;top:852px;width:857px;height:17px;border:1px solid #c5c2b8;border-radius:2px;"></div>
<span class="t" style="left:5px;top:855px;"><span class="n" style="letter-spacing:0.62px">2014-05-23 17:02:09</span></span>
<span class="t" style="left:128px;top:855px;">当前操作员<span class="c">：</span><span class="n" style="letter-spacing:0.01px">admin</span></span>
<span class="t" style="left:279px;top:855px;">当前账套<span class="c">：</span>演示数据库</span>
<span class="t" style="left:500px;top:855px;color:#0000ff;text-decoration:underline;">点击更换账套</span>
<span class="t" style="left:586px;top:855px;"><span class="n" style="letter-spacing:0.50px">F2-</span>客户管理<span class="n" style="letter-spacing:1.11px"> F3-</span>库存状况<span class="n" style="letter-spacing:1.11px"> F4-</span>营业报表<span class="n" style="letter-spacing:1.11px"> F6-</span>提醒查询<span class="n" style="letter-spacing:1.11px"> F7-</span>换班操作</span>
</div>
</body></html>
